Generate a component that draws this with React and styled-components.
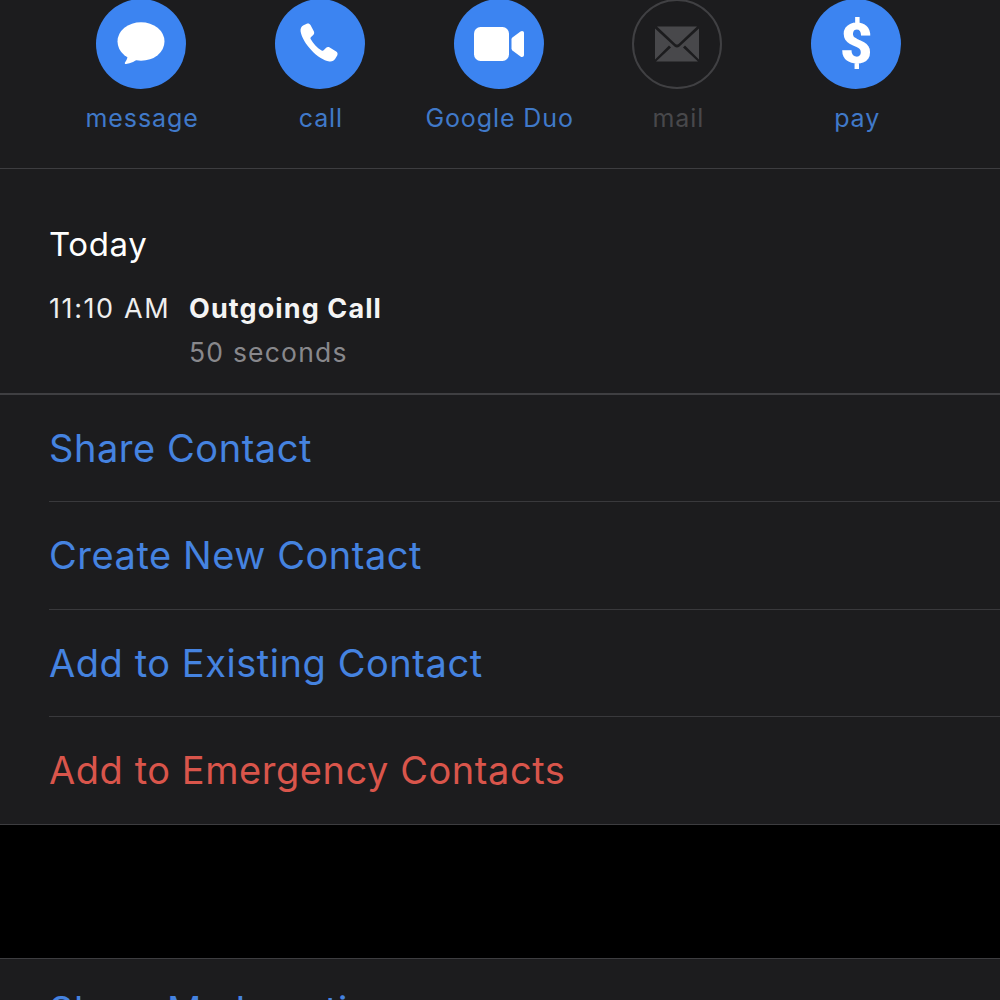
import React from "react";
import styled, { createGlobalStyle } from "styled-components";

const Global = createGlobalStyle`
  html, body { margin: 0; padding: 0; background: #000; }
  body { width: 1000px; height: 1000px; overflow: hidden; font-family: Inter, "Liberation Sans", sans-serif; -webkit-font-smoothing: antialiased; }
`;

const Page = styled.div`
  width: 1000px;
  height: 1000px;
  overflow: hidden;
  background: #000;
`;

const ActionBar = styled.div`
  display: grid;
  grid-template-columns: repeat(5, 178.75px);
  padding-left: 51.75px;
  height: 169px;
  box-sizing: border-box;
  background: #1c1c1e;
  border-bottom: 1px solid #3d3d40;
`;

const Action = styled.div`
  display: flex;
  flex-direction: column;
  align-items: center;
  margin-top: -1px;
`;

const Circle = styled.div`
  width: 90px;
  height: 90px;
  box-sizing: border-box;
  border-radius: 50%;
  display: flex;
  align-items: center;
  justify-content: center;
  background: ${p => (p.$off ? "transparent" : "#3c84f1")};
  border: ${p => (p.$off ? "2px solid #404043" : "none")};
`;

const ActionLabel = styled.div`
  margin-top: 14px;
  padding-left: 2px;
  font-size: 25px;
  line-height: 30px;
  letter-spacing: 0.9px;
  white-space: nowrap;
  color: ${p => (p.$off ? "#48484b" : "#4079c9")};
`;

const History = styled.div`
  height: 226px;
  box-sizing: border-box;
  padding: 56px 0 0 49px;
  background: #1c1c1e;
  border-bottom: 2px solid #3f3f42;
`;

const DayTitle = styled.div`
  font-size: 33px;
  line-height: 38px;
  letter-spacing: 0.6px;
  color: #fff;
`;

const CallRow = styled.div`
  display: flex;
  margin-top: 27px;
`;

const CallTime = styled.div`
  width: 140px;
  font-size: 27px;
  line-height: 38px;
  letter-spacing: 1.6px;
  color: #eeeeee;
  white-space: nowrap;
`;

const CallDetail = styled.div`
  display: flex;
  flex-direction: column;
  gap: 5px;
`;

const CallType = styled.div`
  font-size: 27px;
  line-height: 38px;
  font-weight: 700;
  letter-spacing: 1.1px;
  color: #f4f4f4;
`;

const CallDuration = styled.div`
  font-size: 26.5px;
  line-height: 38px;
  letter-spacing: 1.2px;
  color: #88888c;
`;

const Group = styled.div`
  background: #1c1c1e;
  padding-left: 49px;
  border-bottom: 1px solid #3d3d40;
`;

const Row = styled.div`
  height: 107.25px;
  box-sizing: border-box;
  display: flex;
  align-items: center;
  font-size: 38px;
  letter-spacing: 0.55px;
  color: ${p => (p.$danger ? "#d9554b" : "#4583e0")};
  border-bottom: ${p => (p.$last ? "none" : "1px solid #39393c")};
  white-space: nowrap;
`;

const Gap = styled.div`
  height: 133px;
  background: #000;
`;

const BottomGroup = styled.div`
  background: #1c1c1e;
  border-top: 1px solid #3d3d40;
  padding: 28px 0 0 49px;
  height: 60px;
`;

const BottomText = styled.div`
  font-size: 38px;
  line-height: 46px;
  letter-spacing: 0.55px;
  color: #4583e0;
  white-space: nowrap;
`;

const MessageIcon = () => (
  <svg width="48" height="44" viewBox="0 0 48 44">
    <ellipse cx="24" cy="19.500" rx="23.500" ry="19.300" fill="#fff" />
    <path fill="#fff" d="M11 30c.4 3.600-.6 7-3 10.500-.6.900 0 1.700 1.100 1.500 4.300-.6 9.700-2.700 13.400-6.600z" />
  </svg>
);

const PhoneIcon = () => (
  <svg width="42" height="42" viewBox="0 0 42 42">
    <path fill="#fff" d="M4.500 2.300 7.700 .8c1.600-.7 3-.1 3.800 1.300l3.300 6.100c.7 1.300.4 2.700-.6 3.700l-2.100 2c-.7.7-.8 1.500-.3 2.300 2.700 4.800 6 8.300 10.800 11.200.8.500 1.600.4 2.300-.3l2-2c1.100-1.100 2.500-1.300 3.800-.5l6.500 4c1.400.9 1.800 2.500 1 3.900l-1.800 3.100c-1.300 2.200-3.400 3.200-6 2.900C19 36.500 3.700 20.500 1.600 8.400 1.200 5.800 2.200 3.500 4.500 2.300z" />
  </svg>
);

const VideoIcon = () => (
  <svg width="50" height="34" viewBox="0 0 50 34">
    <rect x="0" y="0" width="35" height="34" rx="6.500" fill="#fff" />
    <path fill="#fff" d="M37.500 12.500c0-.8.300-1.400.9-1.900L46.500 4.600C48 3.500 50 4.200 50 6v22c0 1.800-2 2.500-3.500 1.400l-8.100-6c-.6-.5-.9-1.100-.9-1.900z" />
  </svg>
);

const MailIcon = () => (
  <svg width="46" height="36" viewBox="0 0 46 36">
    <path fill="#48484b" d="M1 2.500 20.500 20.500c1.500 1.300 3.500 1.300 5 0L45 2.500V33.500L31 19.500 29 21.500 44 35.500H2L17 21.500 15 19.500 1 33.500z" />
    <path fill="#48484b" d="M3 .5h40L24.500 18c-.9.800-2.100.800-3 0z" />
  </svg>
);

const DollarGlyph = styled.span`
  font-family: Roboto, "Liberation Sans", sans-serif;
  font-size: 56px;
  line-height: 1;
  font-weight: 900;
  color: #fff;
`;

const actions = [
  { label: "message", icon: <MessageIcon /> },
  { label: "call", icon: <PhoneIcon /> },
  { label: "Google Duo", icon: <VideoIcon /> },
  { label: "mail", icon: <MailIcon />, off: true },
  { label: "pay", icon: <DollarGlyph>$</DollarGlyph> },
];

const rows = ["Share Contact", "Create New Contact", "Add to Existing Contact"];

export default function App() {
  return (
    <Page>
      <Global />
      <ActionBar>
        {actions.map(a => (
          <Action key={a.label}>
            <Circle $off={a.off}>{a.icon}</Circle>
            <ActionLabel $off={a.off}>{a.label}</ActionLabel>
          </Action>
        ))}
      </ActionBar>
      <History>
        <DayTitle>Today</DayTitle>
        <CallRow>
          <CallTime>11:10 AM</CallTime>
          <CallDetail>
            <CallType>Outgoing Call</CallType>
            <CallDuration>50 seconds</CallDuration>
          </CallDetail>
        </CallRow>
      </History>
      <Group>
        {rows.map(r => <Row key={r}>{r}</Row>)}
        <Row $danger $last>Add to Emergency Contacts</Row>
      </Group>
      <Gap />
      <BottomGroup>
        <BottomText>Share My Location</BottomText>
      </BottomGroup>
    </Page>
  );
}
